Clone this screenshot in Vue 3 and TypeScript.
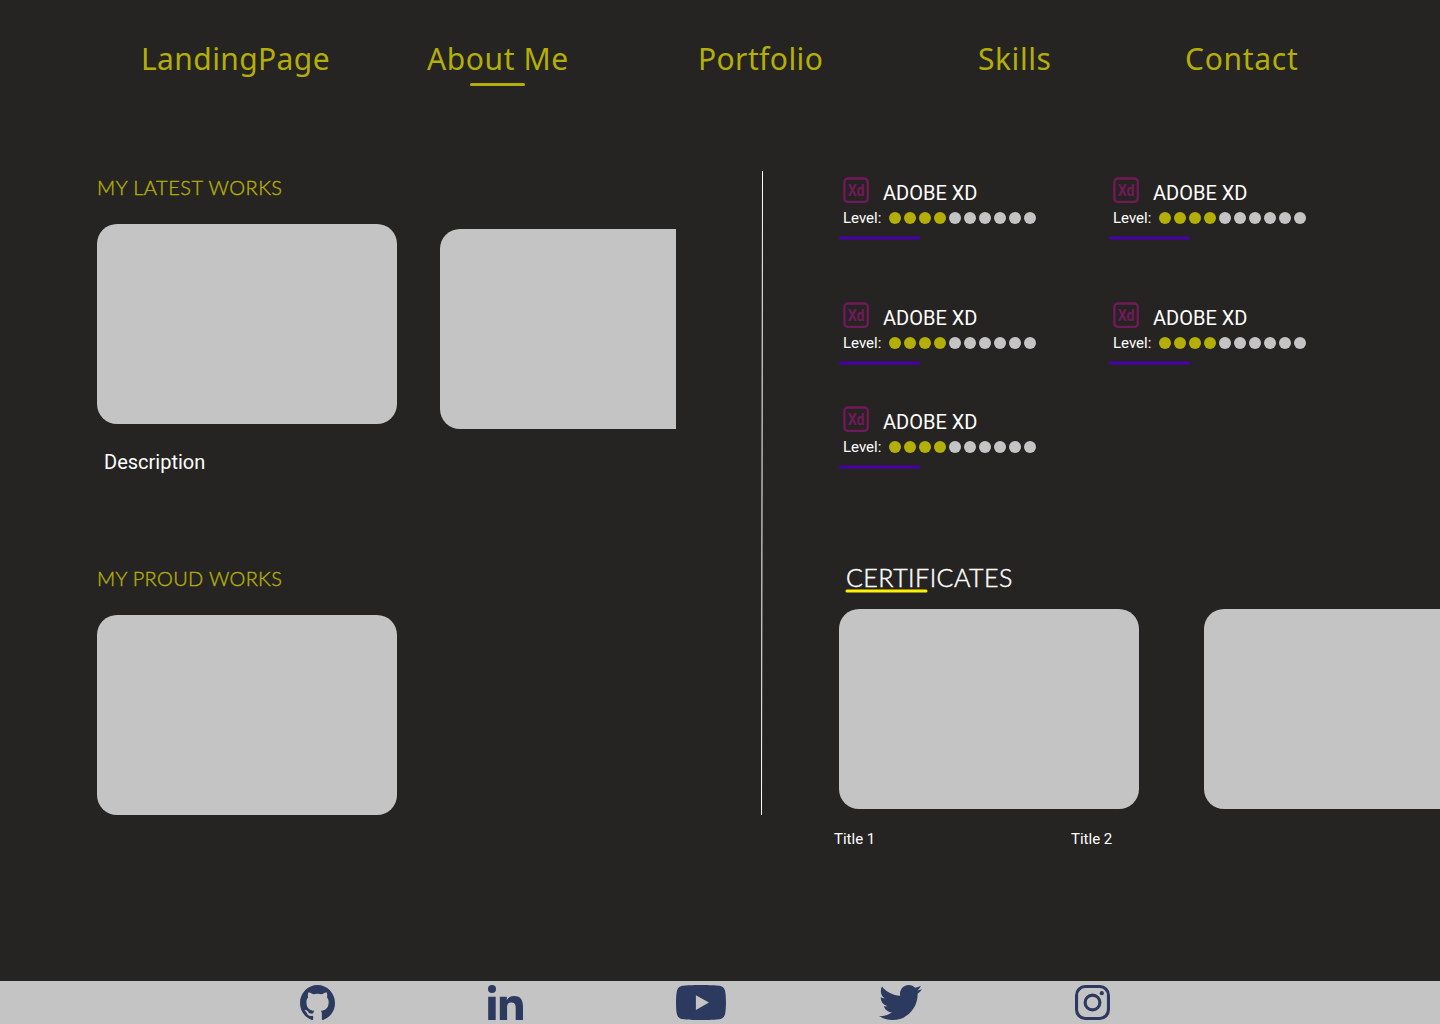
<script setup lang="ts">
interface NavItem {
  label: string
  key: string
  active?: boolean
}

interface Skill {
  name: string
  level: number
}

const navItems: NavItem[] = [
  { label: 'LandingPage', key: 'landing' },
  { label: 'About Me', key: 'about', active: true },
  { label: 'Portfolio', key: 'portfolio' },
  { label: 'Skills', key: 'abilities' },
  { label: 'Contact', key: 'contact' },
]

const maxLevel = 10
const skills: Skill[] = Array.from({ length: 5 }, () => ({ name: 'ADOBE XD', level: 4 }))
</script>

<template>
  <div class="page">
    <nav class="nav">
      <a v-for="item in navItems" :key="item.key" class="nav-item" :class="[item.key, { active: item.active }]">
        <span class="nav-label">{{ item.label }}</span>
      </a>
    </nav>

    <main class="main">
      <section class="works">
        <h2 class="heading latest">MY LATEST WORKS</h2>
        <div class="strip">
          <div class="card"></div>
          <div class="card lowered"></div>
        </div>
        <p class="description">Description</p>
        <h2 class="heading proud">MY PROUD WORKS</h2>
        <div class="card"></div>
      </section>

      <svg class="divider" width="3" height="644" viewBox="0 0 3 644">
        <line x1="1.5" y1="0" x2="0.5" y2="644" stroke="#fff" stroke-width="1" />
      </svg>

      <section class="side">
        <div class="skills">
          <article v-for="(skill, i) in skills" :key="i" class="skill">
            <div class="skill-head">
              <svg class="xd" width="26" height="26" viewBox="0 0 26 26">
                <rect x="1.4" y="1.5" width="23.4" height="23.4" rx="3.4" fill="none" stroke="#72195a" stroke-width="2.3" />
                <text x="4.7" y="19.2" textLength="16.8" lengthAdjust="spacingAndGlyphs">Xd</text>
              </svg>
              <span class="skill-name">{{ skill.name }}</span>
            </div>
            <div class="level">
              <span class="level-label">Level:</span>
              <i v-for="n in maxLevel" :key="n" class="dot" :class="{ on: n <= skill.level }"></i>
            </div>
            <svg class="bar" width="83" height="4" viewBox="0 0 83 4">
              <line x1="1.3" y1="2" x2="79.8" y2="2" stroke="#4800ac" stroke-width="3" stroke-linecap="round" />
            </svg>
          </article>
        </div>

        <h2 class="certificates">CERTIFICATES</h2>
        <svg class="bar yellow" width="83" height="4" viewBox="0 0 83 4">
          <line x1="2" y1="2" x2="81" y2="2" stroke="#fff000" stroke-width="3" stroke-linecap="round" />
        </svg>
        <div class="cert-cards">
          <div class="card"></div>
          <div class="card"></div>
        </div>
        <div class="titles">
          <span>Title 1</span>
          <span>Title 2</span>
        </div>
      </section>
    </main>

    <footer class="footer">
      <svg class="github" width="35" height="35" viewBox="0 0 16 15.6" preserveAspectRatio="none">
        <path d="M8 0C3.58 0 0 3.58 0 8c0 3.54 2.29 6.53 5.47 7.59.4.07.55-.17.55-.38 0-.19-.01-.82-.01-1.49-2.01.37-2.53-.49-2.69-.94-.09-.23-.48-.94-.82-1.13-.28-.15-.68-.52-.01-.53.63-.01 1.08.58 1.23.82.72 1.21 1.87.87 2.33.66.07-.52.28-.87.51-1.07-1.78-.2-3.64-.89-3.64-3.95 0-.87.31-1.59.82-2.15-.08-.2-.36-1.02.08-2.12 0 0 .67-.21 2.2.82.64-.18 1.32-.27 2-.27s1.36.09 2 .27c1.53-1.04 2.2-.82 2.2-.82.44 1.1.16 1.92.08 2.12.51.56.82 1.27.82 2.15 0 3.07-1.87 3.75-3.65 3.95.29.25.54.73.54 1.48 0 1.07-.01 1.93-.01 2.2 0 .21.15.46.55.38A8.01 8.01 0 0 0 16 8c0-4.42-3.58-8-8-8z" />
      </svg>
      <svg class="linkedin" width="35" height="35" viewBox="0 0 35 35">
        <circle cx="4" cy="4.1" r="4" />
        <path d="M.2 11.7h7.5V35H.2zM11.8 11.7h7v3.2h.1c1-1.8 3.3-3.8 6.9-3.8 7.6 0 9.2 4.8 9.2 11V35h-7.3V23.6c0-2.7-.1-6.2-4.2-6.2s-4.4 3-4.4 6V35h-7.3z" />
      </svg>
      <svg class="youtube" width="50" height="35" viewBox="14.9 64 546.2 384" preserveAspectRatio="none">
        <path d="M549.655 124.083c-6.281-23.65-24.787-42.276-48.284-48.597C458.781 64 288 64 288 64S117.22 64 74.629 75.486c-23.497 6.322-42.003 24.947-48.284 48.597-11.412 42.867-11.412 132.305-11.412 132.305s0 89.438 11.412 132.305c6.281 23.65 24.787 41.5 48.284 47.821C117.22 448 288 448 288 448s170.78 0 213.371-11.486c23.497-6.321 42.003-24.171 48.284-47.821 11.412-42.867 11.412-132.305 11.412-132.305s0-89.438-11.412-132.305zm-317.51 213.508V175.185l142.739 81.205-142.739 81.201z" />
      </svg>
      <svg class="twitter" width="43" height="35" viewBox="0 48 512 416" preserveAspectRatio="none">
        <path d="M459.37 151.716c.325 4.548.325 9.097.325 13.645 0 138.72-105.583 298.558-298.558 298.558-59.452 0-114.68-17.219-161.137-47.106 8.447.974 16.568 1.299 25.34 1.299 49.055 0 94.213-16.568 130.274-44.832-46.132-.975-84.792-31.188-98.112-72.772 6.498.974 12.995 1.624 19.818 1.624 9.421 0 18.843-1.3 27.614-3.573-48.081-9.747-84.143-51.98-84.143-102.985v-1.299c13.969 7.797 30.214 12.67 47.431 13.319-28.264-18.843-46.781-51.005-46.781-87.391 0-19.492 5.197-37.36 14.294-52.954 51.655 63.675 129.3 105.258 216.365 109.807-1.624-7.797-2.599-15.918-2.599-24.04 0-57.828 46.782-104.934 104.934-104.934 30.213 0 57.502 12.67 76.67 33.137 23.715-4.548 46.456-13.32 66.599-25.34-7.798 24.366-24.366 44.833-46.132 57.827 21.117-2.273 41.584-8.122 60.426-16.243-14.292 20.791-32.161 39.308-52.628 54.253z" />
      </svg>
      <svg class="instagram" width="35" height="35" viewBox="0 0 35 35">
        <rect x="1.55" y="1.55" width="31.9" height="31.9" rx="8.6" fill="none" stroke="#2d3a5f" stroke-width="3.1" />
        <circle cx="17.5" cy="17.5" r="7.4" fill="none" stroke="#2d3a5f" stroke-width="3.1" />
        <circle cx="26.8" cy="8.2" r="2.1" />
      </svg>
    </footer>
  </div>
</template>

<style>
body {
  margin: 0;
  background: #252422;
}
</style>

<style scoped>
.page {
  width: 1440px;
  height: 1024px;
  display: flex;
  flex-direction: column;
  overflow: hidden;
  background: #252422;
  color: #fff;
  font-family: Roboto, "Liberation Sans", sans-serif;
}
h2,
p {
  margin: 0;
  font-weight: 400;
}
svg {
  display: block;
  flex: none;
}
.nav {
  display: flex;
  height: 131px;
  padding: 40px 0 0 141px;
  box-sizing: border-box;
  flex: none;
}
.nav-item {
  display: flex;
  flex-direction: column;
  align-items: flex-start;
  color: #b4ae08;
  font: 400 30px/38px "Noto Sans", "Open Sans", sans-serif;
  letter-spacing: 0.4px;
  white-space: nowrap;
}
.landing { width: 286px; }
.about { width: 142px; margin-right: 129px; letter-spacing: 0.6px; }
.portfolio { width: 280px; }
.abilities { width: 207px; letter-spacing: 0.55px; }
.contact { letter-spacing: 0.7px; }
.nav-item.active::after {
  content: "";
  width: 55px;
  height: 3px;
  margin: 5px 0 0 43px;
  border-radius: 2px;
  background: #b4ae08;
}
.main {
  display: flex;
  flex: 1;
  padding-left: 97px;
  min-height: 0;
}
.works {
  width: 579px;
  padding-top: 44px;
  margin-right: 85px;
  flex: none;
}
.heading {
  color: #b4ae08;
  font: 300 20px/24px Lato, "Open Sans", sans-serif;
  -webkit-text-stroke: 0.4px #b4ae08;
  white-space: nowrap;
}
.latest { letter-spacing: 0.5px; }
.strip {
  display: flex;
  gap: 43px;
  height: 205px;
  margin-top: 25px;
  overflow: hidden;
}
.card {
  width: 300px;
  height: 200px;
  border-radius: 20px;
  background: #c4c4c4;
  flex: none;
}
.card.lowered { margin-top: 5px; }
.description {
  margin: 21px 0 0 7px;
  font-size: 20px;
  line-height: 24px;
}
.proud {
  margin: 92px 0 25px;
  letter-spacing: 0.33px;
}
.divider { margin-top: 40px; }
.side {
  width: 601px;
  margin-left: 75px;
  padding-top: 46px;
  flex: none;
}
.skills {
  display: grid;
  grid-template-columns: 270px 270px;
  grid-template-rows: 125px 104px 104px;
}
.skill-head {
  display: flex;
  padding-left: 4px;
  height: 27px;
}
.xd text {
  fill: #72195a;
  font: 700 17px Roboto, sans-serif;
}
.skill-name {
  margin: 4px 0 0 14px;
  font-size: 20px;
  line-height: 24px;
}
.level {
  display: flex;
  align-items: center;
  gap: 3px;
  height: 18px;
  margin-top: 5px;
  padding-left: 4px;
}
.level-label {
  width: 43px;
  font-size: 15px;
  line-height: 18px;
}
.dot {
  width: 12px;
  height: 12px;
  border-radius: 50%;
  background: #c4c4c4;
}
.dot.on { background: #b4ae08; }
.bar {
  margin-top: 9px;
  overflow: visible;
}
.certificates {
  margin: 52px 0 0 7px;
  font: 300 25px/30px Lato, "Open Sans", sans-serif;
  -webkit-text-stroke: 0.45px #fff;
  letter-spacing: 0.45px;
}
.bar.yellow {
  position: relative;
  margin: -3px 0 0 6px;
}
.cert-cards {
  display: flex;
  gap: 65px;
  margin-top: 16px;
  overflow: hidden;
}
.titles {
  display: flex;
  margin: 21px 0 0 -5px;
  font-size: 15px;
  line-height: 18px;
}
.titles span { width: 237px; }
.footer {
  display: flex;
  gap: 153px;
  height: 43px;
  padding: 4px 0 0 300px;
  box-sizing: border-box;
  background: #c4c4c4;
  fill: #2d3a5f;
  flex: none;
}
</style>
